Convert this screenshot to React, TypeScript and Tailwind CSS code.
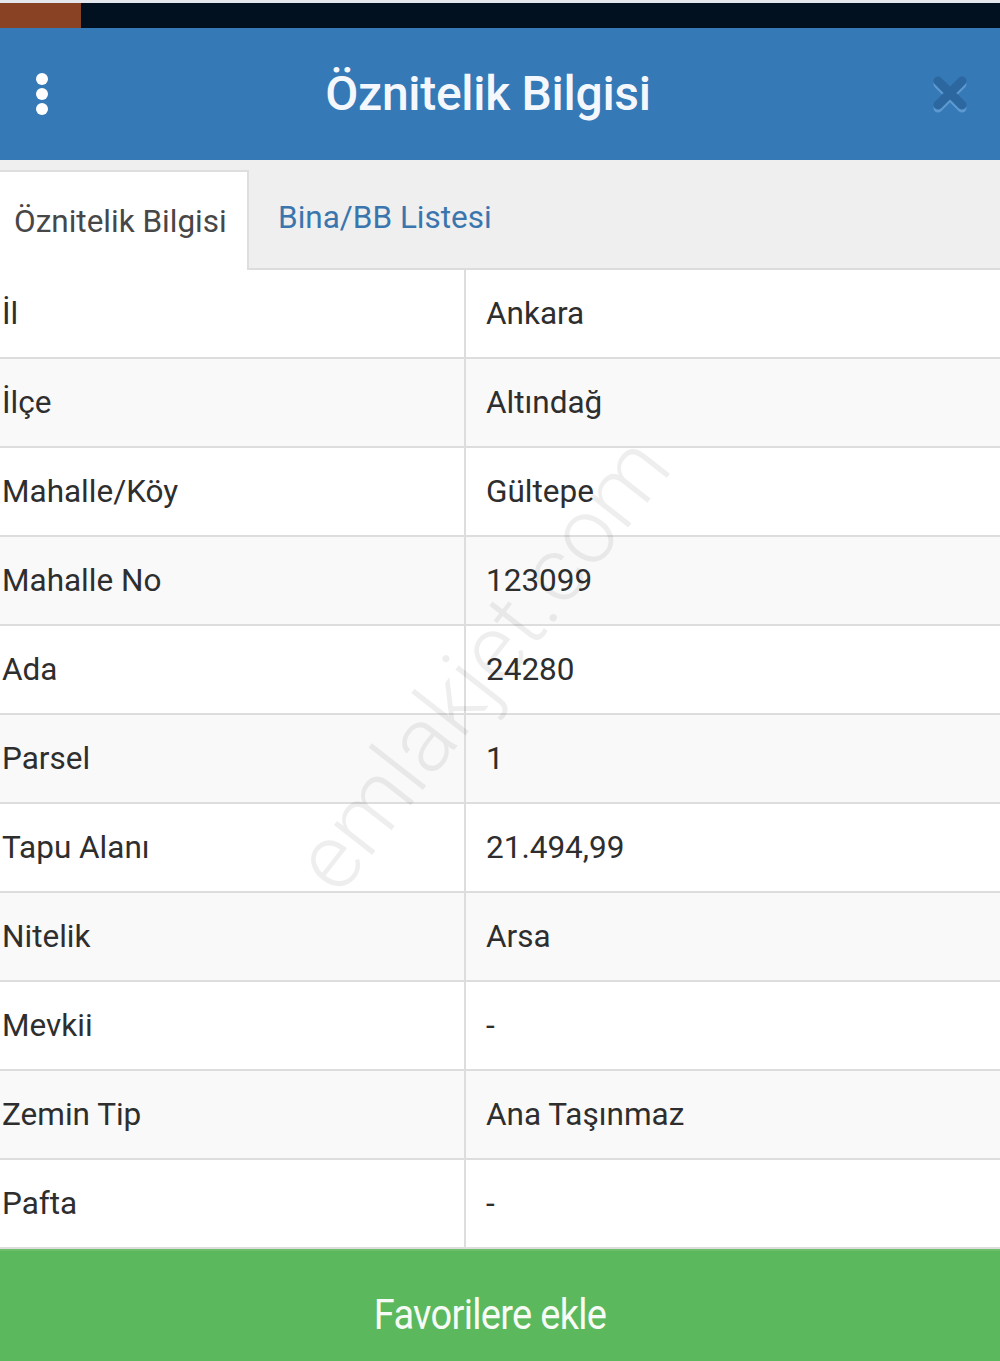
import React from 'react';

const rows: { label: string; value: string }[] = [
  { label: 'İl', value: 'Ankara' },
  { label: 'İlçe', value: 'Altındağ' },
  { label: 'Mahalle/Köy', value: 'Gültepe' },
  { label: 'Mahalle No', value: '123099' },
  { label: 'Ada', value: '24280' },
  { label: 'Parsel', value: '1' },
  { label: 'Tapu Alanı', value: '21.494,99' },
  { label: 'Nitelik', value: 'Arsa' },
  { label: 'Mevkii', value: '-' },
  { label: 'Zemin Tip', value: 'Ana Taşınmaz' },
  { label: 'Pafta', value: '-' },
];

const KebabIcon = () => (
  <svg width="14" height="44" viewBox="0 0 14 44">
    <circle cx="7" cy="7" r="6" fill="#fff" />
    <circle cx="7" cy="22" r="6" fill="#fff" />
    <circle cx="7" cy="37" r="6" fill="#fff" />
  </svg>
);

const CloseIcon = () => (
  <svg width="38" height="38" viewBox="0 0 38 38">
    <g strokeLinecap="round" strokeWidth="9">
      <path d="M7 9 L31 33 M31 9 L7 33" stroke="#5d99d1" />
      <path d="M7 6 L31 30 M31 6 L7 30" stroke="#2c67a0" />
    </g>
  </svg>
);

export default function App() {
  return (
    <div
      className="w-[1000px] h-[1361px] bg-white flex flex-col overflow-hidden relative"
      style={{ fontFamily: 'Roboto, "Noto Sans", sans-serif' }}
    >
      {/* status strip */}
      <div className="h-[3px] bg-[#e4e8ec]" />
      <div className="h-[25px] bg-[#02111f] flex">
        <div className="w-[81px] bg-[#8a4224]" />
      </div>

      {/* header */}
      <div className="h-[132px] bg-[#3579b7] flex items-center justify-between px-[35px]">
        <KebabIcon />
        <h1 className="text-[48px] font-medium text-[#f4f8fc] tracking-[-0.3px] leading-none mr-[4px]">
          Öznitelik Bilgisi
        </h1>
        <div className="mr-[-4px]">
          <CloseIcon />
        </div>
      </div>

      {/* tabs */}
      <div className="h-[110px] bg-[#efefef] flex items-end border-b-2 border-[#dcdcdc]">
        <div className="h-[100px] w-[249px] bg-white border-r-2 border-t-2 border-[#dedede] mb-[-2px] flex items-center pl-[14px] pt-[2px] text-[31.5px] text-[#474747]">
          Öznitelik Bilgisi
        </div>
        <div className="h-[100px] flex items-center pl-[29px] text-[31.5px] text-[#3a76ad]">
          Bina/BB Listesi
        </div>
      </div>

      {/* table */}
      <div className="flex flex-col">
        {rows.map((r, i) => (
          <div
            key={r.label}
            className={`h-[89px] flex border-b-2 border-[#dddddd] text-[31.5px] text-[#2e2e2e] ${
              i % 2 === 1 ? 'bg-[#f9f9f9]' : 'bg-white'
            } ${i === rows.length - 1 ? 'border-b-0 h-[87px]' : ''}`}
          >
            <div className="w-[466px] border-r-2 border-[#dddddd] flex items-center pl-[2px]">
              {r.label}
            </div>
            <div className="flex-1 flex items-center pl-[20px]">{r.value}</div>
          </div>
        ))}
      </div>

      {/* watermark */}
      <div className="absolute left-[482px] top-[664px] -translate-x-1/2 -translate-y-1/2 -rotate-[52deg] text-[92px] font-light text-[#000]/[0.065] pointer-events-none whitespace-nowrap">
        emlakjet.com
      </div>

      {/* favorite button */}
      <button className="flex-1 bg-[#5cb85c] border-t-2 border-[#6cc06c] text-[#f6fbf6] text-[38px] tracking-[-0.7px] flex items-center justify-center pr-[20px] pt-[18px]">
        <span className="inline-block scale-y-110">Favorilere ekle</span>
      </button>
    </div>
  );
}
